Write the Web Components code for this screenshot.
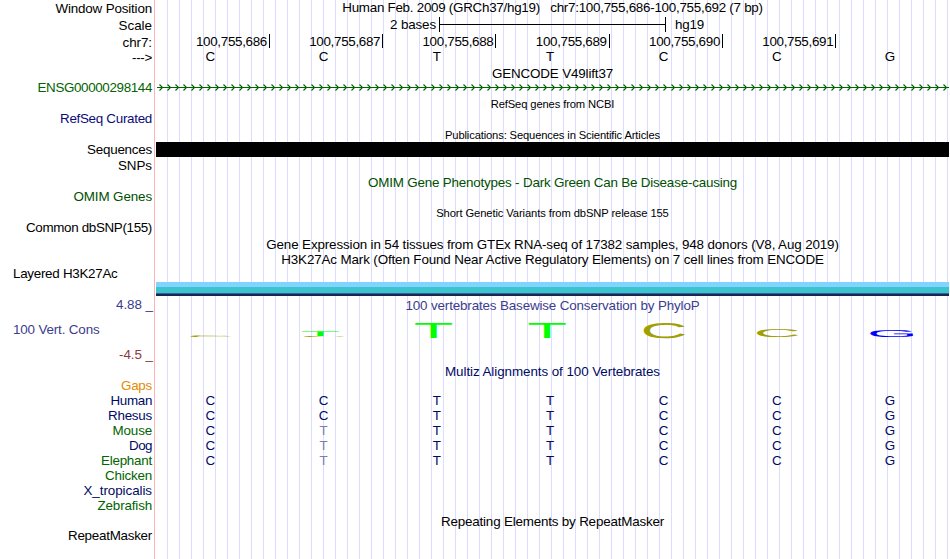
<!DOCTYPE html>
<html lang="en">
<head>
<meta charset="utf-8">
<title>Genome tracks</title>
<style>
  body {
    margin: 0;
    background: #fff;
    font: 13.4px/15px "Liberation Sans", Arial, sans-serif;
    color: #000;
  }
</style>
</head>
<body>
<genome-browser></genome-browser>

<script>
(function () {
  // text spread to a fixed advance width
  class FitText extends HTMLElement {
    constructor() {
      super();
      this.root = this.attachShadow({mode: 'open'});
      this.root.innerHTML = `<style>
        :host { display: inline-block; white-space: pre; }
        span { display: inline-block; }
      </style><span><slot></slot></span>`;
    }
    connectedCallback() {
      const span = this.root.querySelector('span');
      const wanted = parseFloat(this.getAttribute('w'));
      if (!wanted) return;
      const gap = (wanted - span.getBoundingClientRect().width) / this.textContent.length;
      span.style.letterSpacing = gap + 'px';
    }
  }
  window.customElements.define('fit-text', FitText);

  // one line of the image: label on the left, plot on the right
  class TrackRow extends HTMLElement {
    constructor() {
      super();
      this.root = this.attachShadow({mode: 'open'});
      this.root.innerHTML = `<style>
        :host { display: grid; grid-template-columns: 156px 793px; height: ${this.getAttribute('h')}px; }
        .label { text-align: right; padding-right: 4px; white-space: nowrap; color: ${this.getAttribute('tone') || '#000'}; }
        :host([left]) .label { text-align: left; padding-left: 13px; }
        .plot { min-width: 0; }
      </style>
      <div class="label"><slot name="label"></slot></div>
      <div class="plot"><slot></slot></div>`;
    }
  }
  window.customElements.define('track-row', TrackRow);

  class TrackTitle extends HTMLElement {
    constructor() {
      super();
      this.root = this.attachShadow({mode: 'open'});
      this.root.innerHTML = `<style>
        :host { display: flex; justify-content: center; height: 15px; white-space: nowrap; color: ${this.getAttribute('tone') || '#000'}; }
        :host([small]) { font-size: 11.2px; padding-top: 1px; }
        :host([up]) { margin-top: -1px; }
        :host([down]) { padding-top: 1px; }
      </style><slot></slot>`;
    }
  }
  window.customElements.define('track-title', TrackTitle);

  class BaseRow extends HTMLElement {
    constructor() {
      super();
      this.root = this.attachShadow({mode: 'open'});
      const cells = [...this.getAttribute('seq')].map(b =>
        b === 't' ? '<i class="diff">T</i>' : `<i>${b}</i>`).join('');
      this.root.innerHTML = `<style>
        :host { display: grid; grid-template-columns: repeat(7, 1fr); width: 793px; margin-left: -2.3px; text-align: center; color: ${this.getAttribute('tone') || '#000'}; }
        :host([up]) { margin-top: -1px; }
        i { font-style: normal; }
        .diff { color: #7d7daf; }
      </style>${cells}`;
    }
  }
  window.customElements.define('base-row', BaseRow);

  class PositionRuler extends HTMLElement {
    constructor() {
      super();
      this.root = this.attachShadow({mode: 'open'});
      let cells = '';
      for (let n = 686; n < 692; n++) cells += `<div><fit-text w="71">100,755,${n}</fit-text></div>`;
      this.root.innerHTML = `<style>
        :host { display: grid; grid-template-columns: repeat(7, 113.28px); padding-left: .7px; }
        div { height: 14px; text-align: right; padding-right: 2px; border-right: 1px solid #000; }
      </style>${cells}`;
    }
  }
  window.customElements.define('position-ruler', PositionRuler);

  class ScaleBar extends HTMLElement {
    constructor() {
      super();
      this.root = this.attachShadow({mode: 'open'});
      this.root.innerHTML = `<style>
        :host { display: flex; margin-top: -1px; padding-left: 234px; }
        svg { display: block; margin: 0 9px 0 3px; }
      </style>
      <fit-text w="46">2 bases</fit-text>
      <svg width="227" height="15" shape-rendering="crispEdges"><path d="M.5 0V15M226.5 0V15M0 7.5H227" stroke="#000" fill="none"/></svg>
      <fit-text w="29">hg19</fit-text>`;
    }
  }
  window.customElements.define('scale-bar', ScaleBar);

  class IntronLine extends HTMLElement {
    constructor() {
      super();
      this.root = this.attachShadow({mode: 'open'});
      let d = '';
      for (let x = 3.5; x < 790; x += 8) d += `M${x} .5l3 3l-3 3`;
      this.root.innerHTML = `<style>
        :host { display: block; padding-top: 4px; }
        svg { display: block; }
      </style>
      <svg width="793" height="7"><path d="${d}" stroke="#006400" stroke-width="1.1" fill="none"/><path d="M1 3.5H793" stroke="#006400"/></svg>`;
    }
  }
  window.customElements.define('intron-line', IntronLine);

  class SignalBar extends HTMLElement {
    constructor() {
      super();
      this.root = this.attachShadow({mode: 'open'});
      const bands = this.getAttribute('bands').split(' ').map(b => {
        const [h, c] = b.split(':');
        return `<div style="height:${h}px;background:${c}"></div>`;
      }).join('');
      this.root.innerHTML = `<style>:host { display: block; }</style>${bands}`;
    }
  }
  window.customElements.define('signal-bar', SignalBar);

  // conservation letters, stretched by score
  class BaseLogo extends HTMLElement {
    constructor() {
      super();
      this.root = this.attachShadow({mode: 'open'});
      const fill = {C: '#a0a000', T: '#00ff00', G: '#0000ff'};
      // base, column, baseline, vertical scale
      const marks = [
        ['C', 0, 23.8, .024], ['T', 1, 23, .068], ['C', 1, 24, .016],
        ['T', 2, 25, .218], ['T', 3, 25, .218], ['C', 4, 24.9, .214],
        ['C', 5, 23.9, .115], ['G', 6, 23.9, .102]
      ];
      this.root.innerHTML = `<style>
        :host { display: block; }
        svg { display: block; }
        text { font-size: 100px; text-rendering: geometricPrecision; }
      </style>
      <svg width="793" height="34">${marks.map(([b, col, y, sy]) =>
        `<text fill="${fill[b]}" transform="translate(${31.3 + col * 113.28} ${y}) scale(.65 ${sy})">${b}</text>`).join('')}</svg>`;
    }
  }
  window.customElements.define('base-logo', BaseLogo);

  class ConservationTrack extends HTMLElement {
    constructor() {
      super();
      this.root = this.attachShadow({mode: 'open'});
      this.root.innerHTML = `<style>
        :host { display: grid; grid-template-columns: 156px 793px; height: 67px; padding-top: 1px; color: #3c3c8c; }
        .axis { display: flex; flex-direction: column; gap: 10px; align-items: flex-end; padding: 0 3px 0 13px; }
        .name { align-self: flex-start; }
        .low { color: #8c3c3c; }
        .plot { padding-top: 1px; }
      </style>
      <div class="axis">
        <fit-text w="37">4.88 _</fit-text>
        <fit-text class="name" w="86.5">100 Vert. Cons</fit-text>
        <fit-text class="low" w="34">-4.5 _</fit-text>
      </div>
      <div class="plot">
        <track-title tone="#3c3c8c"><fit-text w="294">100 vertebrates Basewise Conservation by PhyloP</fit-text></track-title>
        <base-logo></base-logo>
      </div>`;
    }
  }
  window.customElements.define('conservation-track', ConservationTrack);

  class GenomeBrowser extends HTMLElement {
    constructor() {
      super();
      this.root = this.attachShadow({mode: 'open'});
      const species = [
        ['Human', 41.5, '#000a64', 'CCTTCCG'],
        ['Rhesus', 44, '#000a64', 'CCTTCCG'],
        ['Mouse', 39.5, '#006400', 'CtTTCCG'],
        ['Dog', 23, '#000a64', 'CtTTCCG'],
        ['Elephant', 51, '#006400', 'CtTTCCG'],
        ['Chicken', 47, '#006400', ''],
        ['X_tropicalis', 68.5, '#000a64', ''],
        ['Zebrafish', 54.5, '#006400', '']
      ];
      this.root.innerHTML = `<style>
        :host {
          display: block; box-sizing: border-box; width: 950px; height: 559px; padding-top: 1px; overflow: hidden;
          background:
            linear-gradient(#ffb4b4, #ffb4b4) 154px 0 / 1px 100% no-repeat,
            linear-gradient(90deg, #fff 167px, transparent 167px),
            repeating-linear-gradient(90deg, transparent 0 11px, #dcdcff 11px 12px);
          background-position: 154px 0, 0 0, 0 0;
          background-size: 1px 100%, 100% 100%, 100% 100%;
          background-repeat: no-repeat;
        }
      </style>
      <track-row h="17"><fit-text slot="label" w="96.5">Window Position</fit-text>
        <track-title up><fit-text w="420.5">Human Feb. 2009 (GRCh37/hg19)\u00a0\u00a0 chr7:100,755,686-100,755,692 (7 bp)</fit-text></track-title></track-row>
      <track-row h="17"><fit-text slot="label" w="33.5">Scale</fit-text><scale-bar></scale-bar></track-row>
      <track-row h="15"><fit-text slot="label" w="29.5">chr7:</fit-text><position-ruler style="margin-top:-1px"></position-ruler></track-row>
      <track-row h="16"><fit-text slot="label" w="20">---&gt;</fit-text><base-row up seq="CCTTCCG"></base-row></track-row>
      <track-row h="14"><track-title><fit-text w="121">GENCODE V49lift37</fit-text></track-title></track-row>
      <track-row h="16" tone="#006400"><fit-text slot="label" w="114.5">ENSG00000298144</fit-text><intron-line></intron-line></track-row>
      <track-row h="15"><track-title small><fit-text w="123.5">RefSeq genes from NCBI</fit-text></track-title></track-row>
      <track-row h="16" tone="#0c0c78"><fit-text slot="label" w="92">RefSeq Curated</fit-text></track-row>
      <track-row h="15"><track-title small><fit-text w="215">Publications: Sequences in Scientific Articles</fit-text></track-title></track-row>
      <track-row h="16"><fit-text slot="label" w="65">Sequences</fit-text><signal-bar bands="15:#000"></signal-bar></track-row>
      <track-row h="17"><fit-text slot="label" w="34">SNPs</fit-text></track-row>
      <track-row h="14"><track-title tone="#005000"><fit-text w="369">OMIM Gene Phenotypes - Dark Green Can Be Disease-causing</fit-text></track-title></track-row>
      <track-row h="16" tone="#005000"><fit-text slot="label" w="78.5">OMIM Genes</fit-text></track-row>
      <track-row h="15"><track-title small><fit-text w="232.5">Short Genetic Variants from dbSNP release 155</fit-text></track-title></track-row>
      <track-row h="17"><fit-text slot="label" w="126">Common dbSNP(155)</fit-text></track-row>
      <track-row h="15"><track-title><fit-text w="572.5">Gene Expression in 54 tissues from GTEx RNA-seq of 17382 samples, 948 donors (V8, Aug 2019)</fit-text></track-title></track-row>
      <track-row h="14"><track-title><fit-text w="542.5">H3K27Ac Mark (Often Found Near Active Regulatory Elements) on 7 cell lines from ENCODE</fit-text></track-title></track-row>
      <track-row h="16" left><fit-text slot="label" w="104.5">Layered H3K27Ac</fit-text></track-row>
      <track-row h="14"><signal-bar bands="5:#80d4ff 6:#3cc3cc 1:#2864a0 2:#1c2450"></signal-bar></track-row>
      <conservation-track></conservation-track>
      <track-row h="14"><track-title tone="#000a64"><fit-text w="215">Multiz Alignments of 100 Vertebrates</fit-text></track-title></track-row>
      <track-row h="15" tone="#e68a00"><fit-text slot="label" w="31">Gaps</fit-text></track-row>
      ${species.map(([name, w, tone, seq]) => `<track-row h="15" tone="${tone}"><fit-text slot="label" w="${w}">${name}</fit-text>
        <base-row seq="${seq}" tone="#000a64"></base-row></track-row>`).join('')}
      <track-row h="15"><track-title down><fit-text w="223">Repeating Elements by RepeatMasker</fit-text></track-title></track-row>
      <track-row h="15"><fit-text slot="label" w="84">RepeatMasker</fit-text></track-row>`;
    }
  }
  window.customElements.define('genome-browser', GenomeBrowser);
})();
</script>
</body>
</html>
